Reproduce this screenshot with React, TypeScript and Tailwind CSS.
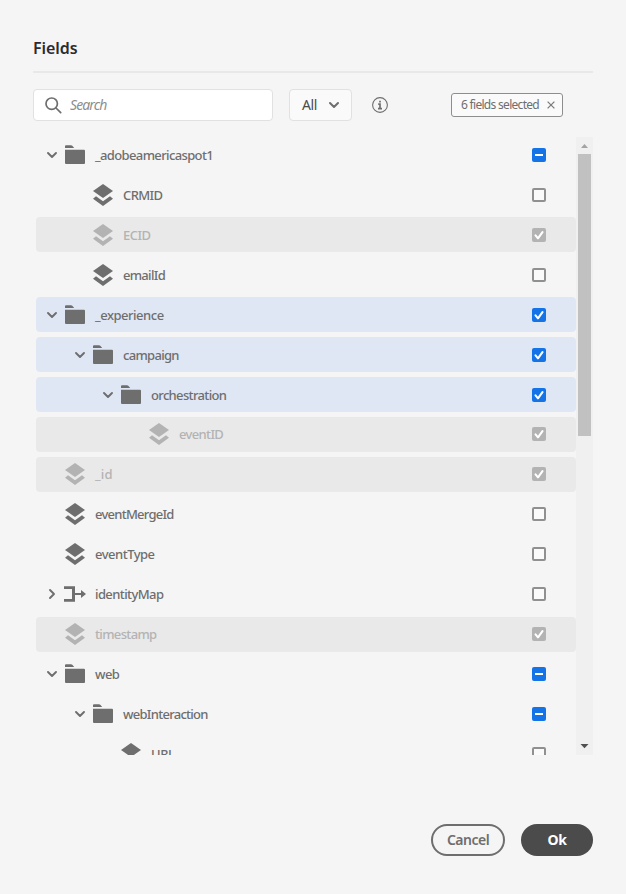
import React from 'react';

type Kind = 'folder' | 'field' | 'map';
type Check = 'off' | 'on' | 'mixed';
type Row = {
  label: string;
  kind: Kind;
  indent: string;
  check: Check;
  open?: boolean;
  disabled?: boolean;
  selected?: boolean;
  tracking: string;
};

const L1 = 'pl-[11px]';
const L2 = 'pl-[39px]';
const L3 = 'pl-[67px]';
const L4 = 'pl-[95px]';

const rows: Row[] = [
  { label: '_adobeamericaspot1', kind: 'folder', indent: L1, check: 'mixed', open: true, tracking: 'tracking-[-0.63px]' },
  { label: 'CRMID', kind: 'field', indent: L2, check: 'off', tracking: 'tracking-[-0.6px]' },
  { label: 'ECID', kind: 'field', indent: L2, check: 'on', disabled: true, tracking: 'tracking-[-0.5px]' },
  { label: 'emailId', kind: 'field', indent: L2, check: 'off', tracking: 'tracking-[-0.7px]' },
  { label: '_experience', kind: 'folder', indent: L1, check: 'on', open: true, selected: true, tracking: 'tracking-[-0.48px]' },
  { label: 'campaign', kind: 'folder', indent: L2, check: 'on', open: true, selected: true, tracking: 'tracking-[-0.7px]' },
  { label: 'orchestration', kind: 'folder', indent: L3, check: 'on', open: true, selected: true, tracking: 'tracking-[-0.65px]' },
  { label: 'eventID', kind: 'field', indent: L4, check: 'on', disabled: true, tracking: 'tracking-[-0.65px]' },
  { label: '_id', kind: 'field', indent: L1, check: 'on', disabled: true, tracking: 'tracking-[0.2px]' },
  { label: 'eventMergeId', kind: 'field', indent: L1, check: 'off', tracking: 'tracking-[-0.75px]' },
  { label: 'eventType', kind: 'field', indent: L1, check: 'off', tracking: 'tracking-[-0.5px]' },
  { label: 'identityMap', kind: 'map', indent: L1, check: 'off', open: false, tracking: 'tracking-[-0.6px]' },
  { label: 'timestamp', kind: 'field', indent: L1, check: 'on', disabled: true, tracking: 'tracking-[-0.65px]' },
  { label: 'web', kind: 'folder', indent: L1, check: 'mixed', open: true, tracking: 'tracking-[-0.6px]' },
  { label: 'webInteraction', kind: 'folder', indent: L2, check: 'mixed', open: true, tracking: 'tracking-[-0.72px]' },
  { label: 'URL', kind: 'field', indent: L3, check: 'off', tracking: 'tracking-[-0.35px]' },
];

function Chevron({ open }: { open: boolean }) {
  return (
    <svg width="10" height="12" viewBox="0 0 10 12" fill="none" stroke="#6e6e6e" strokeWidth="1.9" strokeLinecap="round" strokeLinejoin="round">
      <path d={open ? 'M1 4l4 4 4-4' : 'M3 2l4 4-4 4'} />
    </svg>
  );
}

function KindIcon({ kind }: { kind: Kind }) {
  if (kind === 'folder') {
    return (
      <svg width="20" height="20" viewBox="0 0 20 20" fill="currentColor">
        <path d="M0 3V1.200Q0 .2 1 .2h5q.8 0 1.300.6L9.200 3z" />
        <path d="M0 4.800h19a1 1 0 0 1 1 1V18a1 1 0 0 1-1 1H1a1 1 0 0 1-1-1z" />
      </svg>
    );
  }
  if (kind === 'map') {
    return (
      <svg width="22" height="16" viewBox="0 0 22 16" fill="currentColor" className="-ml-px">
        <path d="M0 .3h11V7h6V4l5 4-5 4V9h-6v6.700H0V13h8V3H0z" />
      </svg>
    );
  }
  return (
    <svg width="20" height="22" viewBox="0 0 20 22" fill="currentColor">
      <path d="M10 0l10 7-10 7L0 7z" />
      <path d="M3 12.300l7 5 7-5 3 2.500L10 22 0 14.800z" />
    </svg>
  );
}

function Checkbox({ check, disabled }: { check: Check; disabled?: boolean }) {
  if (check === 'off') {
    return <span className="size-3.5 rounded-[2px] border-2 border-[#909090] bg-[#fafafa]" />;
  }
  return (
    <span className={`flex size-3.5 items-center justify-center rounded-[2px] ${disabled ? 'bg-[#b3b3b3]' : 'bg-[#1473e6]'}`}>
      {check === 'mixed' ? (
        <span className="h-0.5 w-2 bg-white" />
      ) : (
        <svg width="14" height="14" viewBox="0 0 14 14" fill="none" stroke="#fff" strokeWidth="2.1" strokeLinecap="round" strokeLinejoin="round">
          <path d="M3.500 7.300l2.500 3 4.500-6.100" />
        </svg>
      )}
    </span>
  );
}

function TreeRow({ row, raised }: { row: Row; raised: boolean }) {
  const bg = row.disabled ? 'bg-[#e9e9e9]' : row.selected ? 'bg-[#e0e7f4]' : '';
  return (
    <div className={`flex h-[35px] w-[540px] shrink-0 items-center rounded pr-[30px] ${raised ? 'pb-px' : 'pt-px'} ${row.indent} ${bg}`}>
      <span className="w-[18px] shrink-0">{row.open !== undefined && <Chevron open={row.open} />}</span>
      <span className={`flex w-[30px] shrink-0 items-center ${row.disabled ? 'text-[#b3b3b3]' : 'text-[#6e6e6e]'}`}>
        <KindIcon kind={row.kind} />
      </span>
      <span className={`flex-1 text-[13px] leading-5 font-medium whitespace-nowrap ${row.tracking} ${row.disabled ? 'text-[#b3b3b3]' : 'text-[#6e6e6e]'}`}>
        {row.label}
      </span>
      <Checkbox check={row.check} disabled={row.disabled} />
    </div>
  );
}

export default function App() {
  return (
    <main className="flex h-[894px] w-[626px] flex-col bg-[#f5f5f5] px-[33px] font-['Noto_Sans','Open_Sans',sans-serif]">
      <header className="flex h-[73px] shrink-0 items-end border-b-2 border-[#e8e8e8] pb-[11px]">
        <h1 className="text-[16px] leading-6 font-semibold tracking-[-0.05px] text-[#2c2c2c]">Fields</h1>
      </header>

      <div className="mt-4 flex h-8 shrink-0 items-center">
        <label className="flex h-8 w-60 items-center rounded border border-[#e1e1e1] bg-white pl-[11px]">
          <svg width="17" height="17" viewBox="0 0 17 17" fill="none" stroke="#6e6e6e" strokeWidth="1.700" strokeLinecap="round">
            <circle cx="6.700" cy="6.700" r="5.700" />
            <path d="M11 11l4.700 4.700" />
          </svg>
          <span className="ml-2 text-[14px] leading-5 tracking-[-0.9px] text-[#8e8e8e] italic">Search</span>
        </label>
        <button className="ml-4 flex h-8 w-[63px] items-center rounded border border-[#e1e1e1] bg-[#fafafa] pl-3">
          <span className="w-[27px] text-left text-[14px] leading-5 tracking-[-0.4px] text-[#4b4b4b]">All</span>
          <svg width="10" height="12" viewBox="0 0 10 12" fill="none" stroke="#6e6e6e" strokeWidth="2" strokeLinecap="round" strokeLinejoin="round">
            <path d="M1 4l4 4 4-4" />
          </svg>
        </button>
        <svg className="ml-5" width="16" height="16" viewBox="0 0 16 16" fill="none" stroke="#6e6e6e">
          <circle cx="8" cy="8" r="7.400" strokeWidth="1.100" />
          <path d="M8 3.700v1.900M6.200 7.200H8v4.300M6 11.600h4" strokeWidth="1.700" />
        </svg>
        <span className="mr-[30px] ml-auto flex h-6 w-28 items-center justify-between rounded-[3px] border border-[#8e8e8e] bg-[#fafafa] pr-[7px] pl-[9px]">
          <span className="text-[12px] leading-4 tracking-[-0.7px] whitespace-nowrap text-[#6e6e6e]">6 fields selected</span>
          <svg width="8" height="8" viewBox="0 0 8 8" stroke="#7d7d7d" strokeWidth="1.300">
            <path d="M.6.6l6.800 6.800M7.400.6L.6 7.400" />
          </svg>
        </span>
      </div>

      <div className="mt-4 flex h-[618px] shrink-0 overflow-hidden">
        <div className="ml-[3px] flex w-[540px] flex-col gap-[5px]">
          {rows.map((row, i) => (
            <TreeRow key={row.label} row={row} raised={i > 6} />
          ))}
        </div>
        <div className="flex w-[17px] flex-col items-center bg-[#f0f0f0]">
          <svg width="17" height="17" viewBox="0 0 17 17" fill="#a3a3a3">
            <path d="M5 11l3.500-4 3.500 4z" />
          </svg>
          <span className="h-[282px] w-[13px] bg-[#c1c1c1]" />
          <svg className="mt-auto" width="17" height="17" viewBox="0 0 17 17" fill="#505050">
            <path d="M4.500 6l4 4.300 4-4.300z" />
          </svg>
        </div>
      </div>

      <footer className="mt-[69px] flex h-8 shrink-0 justify-end gap-4">
        <button className="h-8 w-[74px] rounded-full border-2 border-[#6e6e6e] text-[14px] leading-7 font-semibold tracking-[-0.5px] text-[#6e6e6e]">Cancel</button>
        <button className="h-8 w-[72px] rounded-full bg-[#4b4b4b] text-[14px] leading-8 font-bold tracking-[-0.4px] text-white">Ok</button>
      </footer>
    </main>
  );
}
